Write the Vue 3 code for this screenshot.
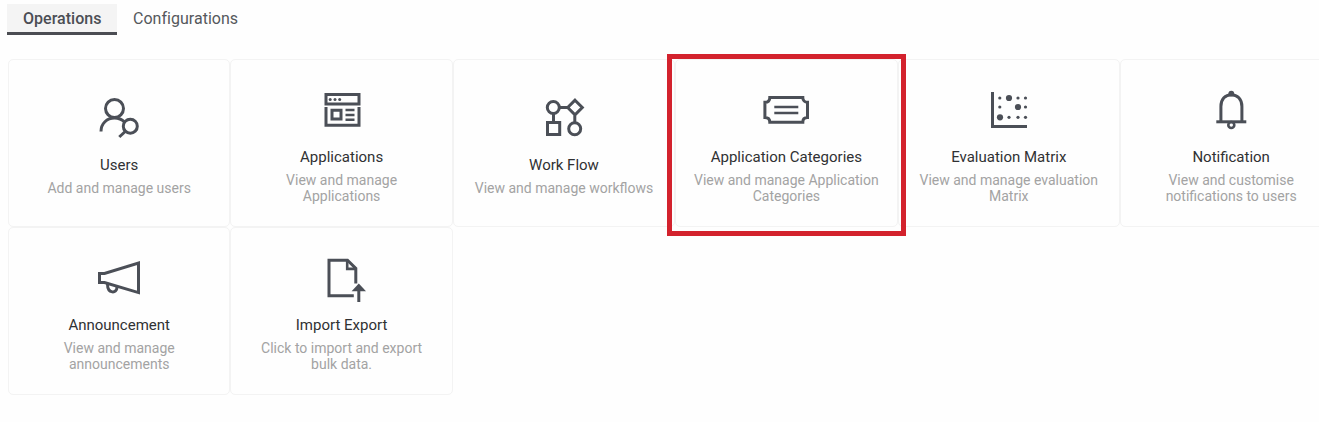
<script setup>
const cards = [
  { id: 'users', title: 'Users', text: 'Add and manage users', box: '9 10 60 60' },
  { id: 'apps', title: 'Applications', text: 'View and manage Applications', box: '11.5 2 60 60' },
  { id: 'flow', title: 'Work Flow', text: 'View and manage workflows', box: '9 5 60 60' },
  { id: 'ticket', title: 'Application Categories', text: 'View and manage Application Categories', box: '10.7 2 60 60', marked: true },
  { id: 'matrix', title: 'Evaluation Matrix', text: 'View and manage evaluation Matrix', box: '9 2 60 60' },
  { id: 'bell', title: 'Notification', text: 'View and customise notifications to users', box: '10.7 2 60 60' },
  { id: 'horn', title: 'Announcement', text: 'View and manage announcements', box: '9 0 60 60' },
  { id: 'import', title: 'Import Export', text: 'Click to import and export bulk data.', box: '6.5 0 60 60' },
]
const dots = [
  [29.8, 18, 1.6], [39, 18, 3.1], [48, 18, 1.6], [55.5, 18, 1.6],
  [29.8, 27, 1.6], [48, 27, 3.1], [55.5, 27, 1.6],
  [30, 37.3, 3.1], [39, 37.3, 1.6], [48, 37.3, 1.6], [55.5, 37.3, 1.6],
]
</script>

<template>
  <div class="page">
    <nav class="tabs">
      <a class="tab active">Operations</a>
      <a class="tab">Configurations</a>
    </nav>
    <main class="grid">
      <section v-for="c in cards" :key="c.id" class="card">
        <svg class="icon" :viewBox="c.box">
          <g v-if="c.id === 'users'">
            <circle cx="34.5" cy="28.5" r="9" />
            <path d="M21 51.5C21 43.5 27 38 34.5 38C38.5 38 42 39.5 44.5 42" />
            <circle cx="50.3" cy="46.2" r="7" />
            <path d="M45.2 51.5L39.3 57" />
          </g>
          <g v-else-if="c.id === 'apps'">
            <path d="M25.5 14.5H58.5V24H25.5ZM25.5 27V45.2H58.5V27M31.5 30.2H40.5V39H31.5Z" />
            <path d="M45 30H54M45 35H54M45 39.7H54" stroke-width="2.5" />
            <circle class="solid" cx="29.7" cy="19.5" r="1.5" />
            <circle class="solid" cx="34.5" cy="19.5" r="1.5" />
            <circle class="solid" cx="39.2" cy="19.5" r="1.5" />
          </g>
          <g v-else-if="c.id === 'flow'">
            <circle cx="28.3" cy="22.5" r="6" />
            <path d="M50 15.2L57.3 22.5L50 29.8L42.7 22.5ZM34.5 22.5H43M28.5 28.5V37.5M49.8 30V37.5M22.5 37.5H34.7V49.6H22.5Z" />
            <circle cx="49.7" cy="43.7" r="6" />
          </g>
          <g v-else-if="c.id === 'ticket'">
            <path d="M24.5 17.4H57.5C57.5 20.5 59.5 22.3 62.2 22.3V37.5C59.5 37.5 57.5 39.2 57.5 42.3H24.5C24.5 39.2 22.5 37.5 19.6 37.5V22.3C22.5 22.3 24.5 20.5 24.5 17.4Z" />
            <path d="M29 27H53M29 33H53" stroke-width="2.3" />
          </g>
          <g v-else-if="c.id === 'matrix'">
            <path d="M22.5 12V46.5H57" />
            <circle v-for="(d, i) in dots" :key="i" class="solid" :cx="d[0]" :cy="d[1]" :r="d[2]" />
          </g>
          <g v-else-if="c.id === 'bell'">
            <path d="M30.6 41.5V26.5C30.6 19 35 14.7 41 14.7S51.6 19 51.6 26.5V41.5" />
            <path d="M26 41.8H56" />
            <circle class="solid" cx="41" cy="13.6" r="2.9" />
            <circle cx="41" cy="45" r="3" stroke-width="2.6" />
          </g>
          <g v-else-if="c.id === 'horn'">
            <path d="M19.5 23.4H24.5L58.5 13V42.6L24.5 32.6H19.5Z" />
            <path d="M27.5 34C27.5 44 37 44 37 37" />
          </g>
          <g v-else>
            <path d="M48.3 45.7H23.5V10.2H42L50.3 18.4V33.5" />
            <path d="M41.7 10V18.9H50.3" stroke-width="2.6" />
            <path d="M53.3 52V38" />
            <path class="solid" d="M53.3 33.5L60.5 41.3H46.1Z" />
          </g>
        </svg>
        <h2>{{ c.title }}</h2>
        <p>{{ c.text }}</p>
        <span v-if="c.marked" class="marker"></span>
      </section>
    </main>
  </div>
</template>

<style>
body { background: #fefefe; }
</style>

<style scoped>
.page {
  height: 422px;
  overflow: hidden;
  box-sizing: border-box;
  padding: 4px 0 0 7px;
  font-family: Roboto, sans-serif;
}
.tabs { display: flex; height: 31px; }
.tab {
  box-sizing: border-box;
  height: 31px;
  padding: 0 16px;
  font-size: 16px;
  line-height: 29px;
  letter-spacing: 0.02px;
  color: #55585c;
}
.active {
  width: 110px;
  font-weight: 500;
  color: #4b4e54;
  background: #f4f4f4;
  border-bottom: 3px solid #4b4d53;
}
.grid {
  display: grid;
  grid-template-columns: repeat(6, 222.4px);
  grid-auto-rows: 168px;
  margin: 24px 0 0 1px;
}
.card {
  position: relative;
  box-sizing: border-box;
  display: flex;
  flex-direction: column;
  align-items: center;
  justify-content: center;
  padding: 0 15px;
  border: 1px solid #f3f3f3;
  border-radius: 5px;
  text-align: center;
}
.icon {
  width: 60px;
  height: 60px;
  flex: none;
  fill: none;
  stroke: #4b4f57;
  stroke-width: 3;
}
.solid { fill: #4b4f57; stroke: none; }
h2 {
  margin: 6px 0;
  font-size: 15px;
  line-height: 18px;
  font-weight: 400;
  color: #303133;
}
p {
  margin: 0;
  font-size: 14px;
  line-height: 16px;
  color: #a3a3a3;
}
.marker {
  position: absolute;
  box-sizing: border-box;
  left: -9.2px;
  top: -6px;
  width: 239px;
  height: 182px;
  border: 5px solid #d3222d;
  z-index: 1;
}
</style>
